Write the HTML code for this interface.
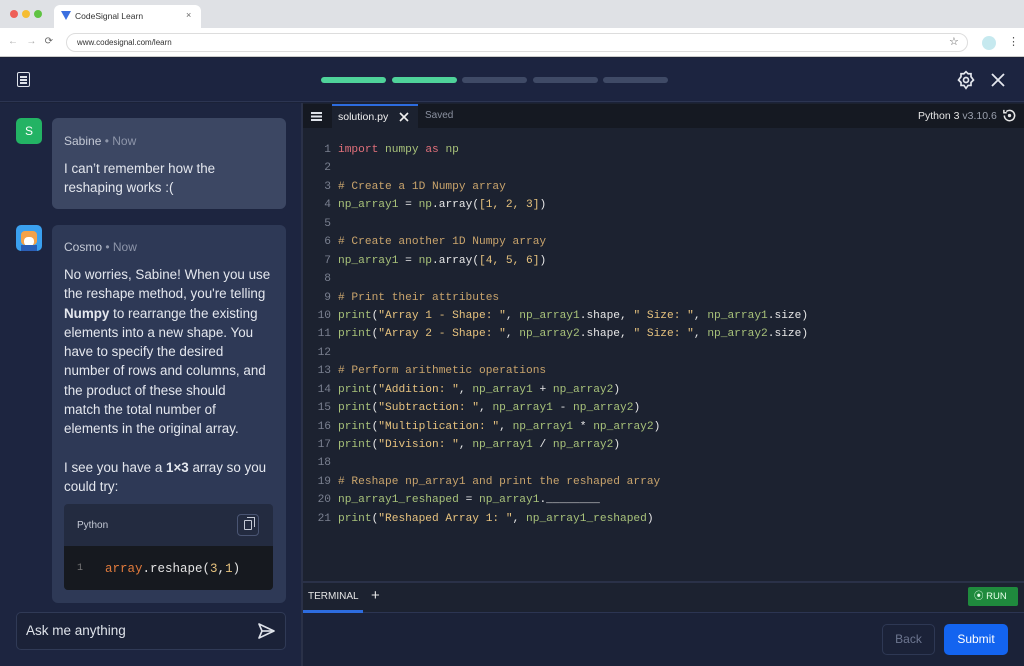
<!DOCTYPE html><html><head><meta charset="utf-8"><style>
*{margin:0;padding:0;box-sizing:border-box}
body{width:1024px;height:666px;overflow:hidden;background:#1b2238;font-family:"Liberation Sans",sans-serif;position:relative}
.a{position:absolute}
.mono{font-family:"Liberation Mono",monospace}
.code div{height:18.45px;line-height:18.45px;white-space:pre}
.k{color:#e0707a}.g{color:#a8c27a}.c{color:#c9a46c}.s{color:#e6c27e}.w{color:#e8e8e8}.n{color:#7a8090;display:inline-block;width:28px;text-align:right;margin-right:7px}
.txt{color:#e4e7ee;font-size:13.4px;line-height:19.3px}
</style></head><body>
<div class="a" style="left:0;top:0;width:1024px;height:28px;background:#dfe1e5"></div>
<div class="a" style="left:10px;top:10px;width:8px;height:8px;border-radius:50%;background:#ee5f57"></div>
<div class="a" style="left:22px;top:10px;width:8px;height:8px;border-radius:50%;background:#f5bd32"></div>
<div class="a" style="left:34px;top:10px;width:8px;height:8px;border-radius:50%;background:#5fc342"></div>
<div class="a" style="left:54px;top:5px;width:147px;height:24px;background:#fff;border-radius:6px 6px 0 0"></div>
<div class="a" style="left:61px;top:11px;width:10px;height:9px;background:#3b6fe0;clip-path:polygon(0 0,100% 0,50% 100%)"></div>
<div class="a" style="left:75px;top:11px;font-size:8.5px;color:#333">CodeSignal Learn</div>
<div class="a" style="left:186px;top:10px;font-size:9px;color:#666">×</div>
<div class="a" style="left:0;top:28px;width:1024px;height:29px;background:#fff;border-bottom:1px solid #ccc"></div>
<div class="a" style="left:8px;top:36px;font-size:10px;color:#aaa">←&nbsp;&nbsp;&nbsp;→&nbsp;&nbsp;&nbsp;<span style="color:#666">⟳</span></div>
<div class="a" style="left:66px;top:33px;width:902px;height:19px;border:1px solid #ddd;border-radius:10px;background:#fff"></div>
<div class="a" style="left:77px;top:38px;font-size:8px;color:#333">www.codesignal.com/learn</div>
<div class="a" style="left:949px;top:35px;font-size:11px;color:#555">☆</div>
<div class="a" style="left:982px;top:36px;width:14px;height:14px;border-radius:50%;background:#c6e9ef"></div>
<div class="a" style="left:1008px;top:35px;font-size:11px;color:#555">⋮</div>
<div class="a" style="left:0;top:58px;width:1024px;height:44px;background:#1c2440;border-bottom:1px solid #2c3552"></div>
<div class="a" style="left:17px;top:72px;width:13px;height:15px;border:1.6px solid #dfe3ea;border-radius:2px"></div>
<div class="a" style="left:20px;top:76px;width:7px;height:1.5px;background:#dfe3ea;box-shadow:0 3px 0 #dfe3ea,0 6px 0 #dfe3ea"></div>
<div class="a" style="left:321px;top:77px;width:65px;height:6px;border-radius:3px;background:#4fd39a"></div>
<div class="a" style="left:392px;top:77px;width:65px;height:6px;border-radius:3px;background:#4fd39a"></div>
<div class="a" style="left:462px;top:77px;width:65px;height:6px;border-radius:3px;background:#3f4a66"></div>
<div class="a" style="left:533px;top:77px;width:65px;height:6px;border-radius:3px;background:#3f4a66"></div>
<div class="a" style="left:603px;top:77px;width:65px;height:6px;border-radius:3px;background:#3f4a66"></div>
<svg class="a" style="left:956px;top:70px" width="20" height="20" viewBox="0 0 24 24" fill="none" stroke="#e4e7ee" stroke-width="2"><circle cx="12" cy="12" r="3"/><path d="M12 2l2.5 2.5h3.5v3.5L21 12l-3 3v3.5h-3.5L12 22l-2.5-3.5H6v-3.5L3 12l3-4V4.5h3.5z"/></svg>
<svg class="a" style="left:991px;top:73px" width="14" height="14" viewBox="0 0 14 14" stroke="#e4e7ee" stroke-width="1.8"><path d="M1 1L13 13M13 1L1 13"/></svg>
<div class="a" style="left:0;top:103px;width:301px;height:563px;background:#1d2540"></div>
<div class="a" style="left:16px;top:118px;width:26px;height:26px;border-radius:5px;background:#23b364;color:#fff;font-size:12px;text-align:center;line-height:26px">S</div>
<div class="a" style="left:52px;top:118px;width:234px;height:91px;border-radius:6px;background:#3c4763"></div>
<div class="a" style="left:64px;top:134px;font-size:12px;color:#c5cad6">Sabine <span style="color:#8e96aa">• Now</span></div>
<div class="a txt" style="left:64px;top:159px">I can’t remember how the<br>reshaping works :(</div>
<div class="a" style="left:16px;top:225px;width:26px;height:26px;border-radius:5px;background:#3aa0ef;overflow:hidden"><div style="position:absolute;left:5px;top:6px;width:16px;height:14px;background:#f3a24a;border-radius:4px"></div><div style="position:absolute;left:8px;top:12px;width:10px;height:9px;background:#fff;border-radius:4px"></div><div style="position:absolute;left:5px;top:20px;width:16px;height:6px;background:#2b5fb6"></div></div>
<div class="a" style="left:52px;top:225px;width:234px;height:378px;border-radius:6px;background:#2e3956"></div>
<div class="a" style="left:64px;top:240px;font-size:12px;color:#c5cad6">Cosmo <span style="color:#8e96aa">• Now</span></div>
<div class="a txt" style="left:64px;top:265px;width:215px">No worries, Sabine! When you use<br>the reshape method, you're telling<br><b>Numpy</b> to rearrange the existing<br>elements into a new shape. You<br>have to specify the desired<br>number of rows and columns, and<br>the product of these should<br>match the total number of<br>elements in the original array.<br><br>I see you have a <b>1×3</b> array so you<br>could try:</div>
<div class="a" style="left:64px;top:504px;width:209px;height:86px;border-radius:4px;background:#232b40;overflow:hidden"><div style="position:absolute;left:0;top:42px;width:209px;height:44px;background:#16191f"></div></div>
<div class="a" style="left:77px;top:520px;font-size:10px;color:#c5cad6">Python</div>
<div class="a" style="left:237px;top:514px;width:22px;height:22px;border:1px solid #4a5573;border-radius:4px"></div>
<div class="a" style="left:244px;top:520px;width:8px;height:10px;border:1.3px solid #c5cad6;border-radius:1px"></div>
<div class="a" style="left:247px;top:517px;width:8px;height:10px;border-top:1.3px solid #c5cad6;border-right:1.3px solid #c5cad6"></div>
<div class="a mono" style="left:77px;top:563px;font-size:10px;color:#777">1</div>
<div class="a mono" style="left:105px;top:562px;font-size:12.5px;color:#e4e4e4"><span style="color:#e07a3c">array</span>.reshape(<span style="color:#e6c27e">3</span>,<span style="color:#e6c27e">1</span>)</div>
<div class="a" style="left:16px;top:612px;width:270px;height:38px;border:1px solid #303a56;border-radius:5px;background:#1b2238"></div>
<div class="a" style="left:26px;top:623px;font-size:13.5px;color:#dfe3ea">Ask me anything</div>
<svg class="a" style="left:256px;top:621px" width="20" height="20" viewBox="0 0 20 20" fill="none" stroke="#dfe3ea" stroke-width="1.6" stroke-linejoin="round"><path d="M3 3L18 10L3 17L6 10Z"/><path d="M6 10H18"/></svg>
<div class="a" style="left:301px;top:103px;width:2px;height:563px;background:#2a3148"></div>
<div class="a" style="left:303px;top:103px;width:721px;height:480px;background:#1c2230"></div>
<div class="a" style="left:303px;top:104px;width:721px;height:24px;background:#151922"></div>
<div class="a" style="left:311px;top:112px;width:11px;height:1.5px;background:#dfe3ea;box-shadow:0 3.5px 0 #dfe3ea,0 7px 0 #dfe3ea"></div>
<div class="a" style="left:332px;top:104px;width:86px;height:24px;background:#1c2230;border-top:2px solid #2d6cdf"></div>
<div class="a" style="left:338px;top:111px;font-size:10.5px;color:#f0f0f0">solution.py</div>
<svg class="a" style="left:399px;top:112px" width="10" height="10" stroke="#f0f0f0" stroke-width="1.6"><path d="M1 1L9 9M9 1L1 9"/></svg>
<div class="a" style="left:425px;top:110px;font-size:10px;color:#8a909f">Saved</div>
<div class="a" style="left:918px;top:110px;font-size:10.5px;color:#e6e6e6">Python 3 <span style="color:#9aa0ad">v3.10.6</span></div>
<svg class="a" style="left:1002px;top:108px" width="15" height="15" viewBox="0 0 16 16" fill="none" stroke="#e6e6e6" stroke-width="1.6"><path d="M2.5 8A5.5 5.5 0 1 0 4.5 3.8"/><path d="M2 2v3h3"/><circle cx="8" cy="8" r="1" fill="#e6e6e6"/></svg>
<div class="a mono code" style="left:303px;top:141px;font-size:11.2px;color:#e8e8e8">
<div><span class="n">1</span><span class="k">import</span> <span class="g">numpy</span> <span class="k">as</span> <span class="g">np</span></div>
<div><span class="n">2</span></div>
<div><span class="n">3</span><span class="c"># Create a 1D Numpy array</span></div>
<div><span class="n">4</span><span class="g">np_array1</span> = <span class="g">np</span>.array(<span class="s">[1, 2, 3]</span>)</div>
<div><span class="n">5</span></div>
<div><span class="n">6</span><span class="c"># Create another 1D Numpy array</span></div>
<div><span class="n">7</span><span class="g">np_array1</span> = <span class="g">np</span>.array(<span class="s">[4, 5, 6]</span>)</div>
<div><span class="n">8</span></div>
<div><span class="n">9</span><span class="c"># Print their attributes</span></div>
<div><span class="n">10</span><span class="g">print</span>(<span class="s">"Array 1 - Shape: "</span>, <span class="g">np_array1</span>.shape, <span class="s">" Size: "</span>, <span class="g">np_array1</span>.size)</div>
<div><span class="n">11</span><span class="g">print</span>(<span class="s">"Array 2 - Shape: "</span>, <span class="g">np_array2</span>.shape, <span class="s">" Size: "</span>, <span class="g">np_array2</span>.size)</div>
<div><span class="n">12</span></div>
<div><span class="n">13</span><span class="c"># Perform arithmetic operations</span></div>
<div><span class="n">14</span><span class="g">print</span>(<span class="s">"Addition: "</span>, <span class="g">np_array1</span> + <span class="g">np_array2</span>)</div>
<div><span class="n">15</span><span class="g">print</span>(<span class="s">"Subtraction: "</span>, <span class="g">np_array1</span> - <span class="g">np_array2</span>)</div>
<div><span class="n">16</span><span class="g">print</span>(<span class="s">"Multiplication: "</span>, <span class="g">np_array1</span> * <span class="g">np_array2</span>)</div>
<div><span class="n">17</span><span class="g">print</span>(<span class="s">"Division: "</span>, <span class="g">np_array1</span> / <span class="g">np_array2</span>)</div>
<div><span class="n">18</span></div>
<div><span class="n">19</span><span class="c"># Reshape np_array1 and print the reshaped array</span></div>
<div><span class="n">20</span><span class="g">np_array1_reshaped</span> = <span class="g">np_array1</span>.________</div>
<div><span class="n">21</span><span class="g">print</span>(<span class="s">"Reshaped Array 1: "</span>, <span class="g">np_array1_reshaped</span>)</div>
</div>
<div class="a" style="left:303px;top:581px;width:721px;height:2px;background:#2a3148"></div>
<div class="a" style="left:303px;top:583px;width:721px;height:30px;background:#1c2230;border-bottom:1px solid #2c3552"></div>
<div class="a" style="left:308px;top:591px;font-size:10px;color:#e6e6e6">TERMINAL</div>
<div class="a" style="left:303px;top:610px;width:60px;height:3px;background:#2d6cdf"></div>
<div class="a" style="left:371px;top:587px;font-size:15px;color:#e6e6e6">+</div>
<div class="a" style="left:968px;top:587px;width:50px;height:19px;background:#1f8a3d;border-radius:2px;color:#e6ffe9;font-size:9.5px;line-height:19px;padding-left:6px">⦿ RUN</div>
<div class="a" style="left:303px;top:614px;width:721px;height:52px;background:#1b2238"></div>
<div class="a" style="left:882px;top:624px;width:53px;height:31px;border:1px solid #2e3854;border-radius:5px;color:#6d7690;font-size:12px;text-align:center;line-height:29px">Back</div>
<div class="a" style="left:944px;top:624px;width:64px;height:31px;background:#1364f0;border-radius:5px;color:#fff;font-size:12px;text-align:center;line-height:31px">Submit</div>
</body></html>
